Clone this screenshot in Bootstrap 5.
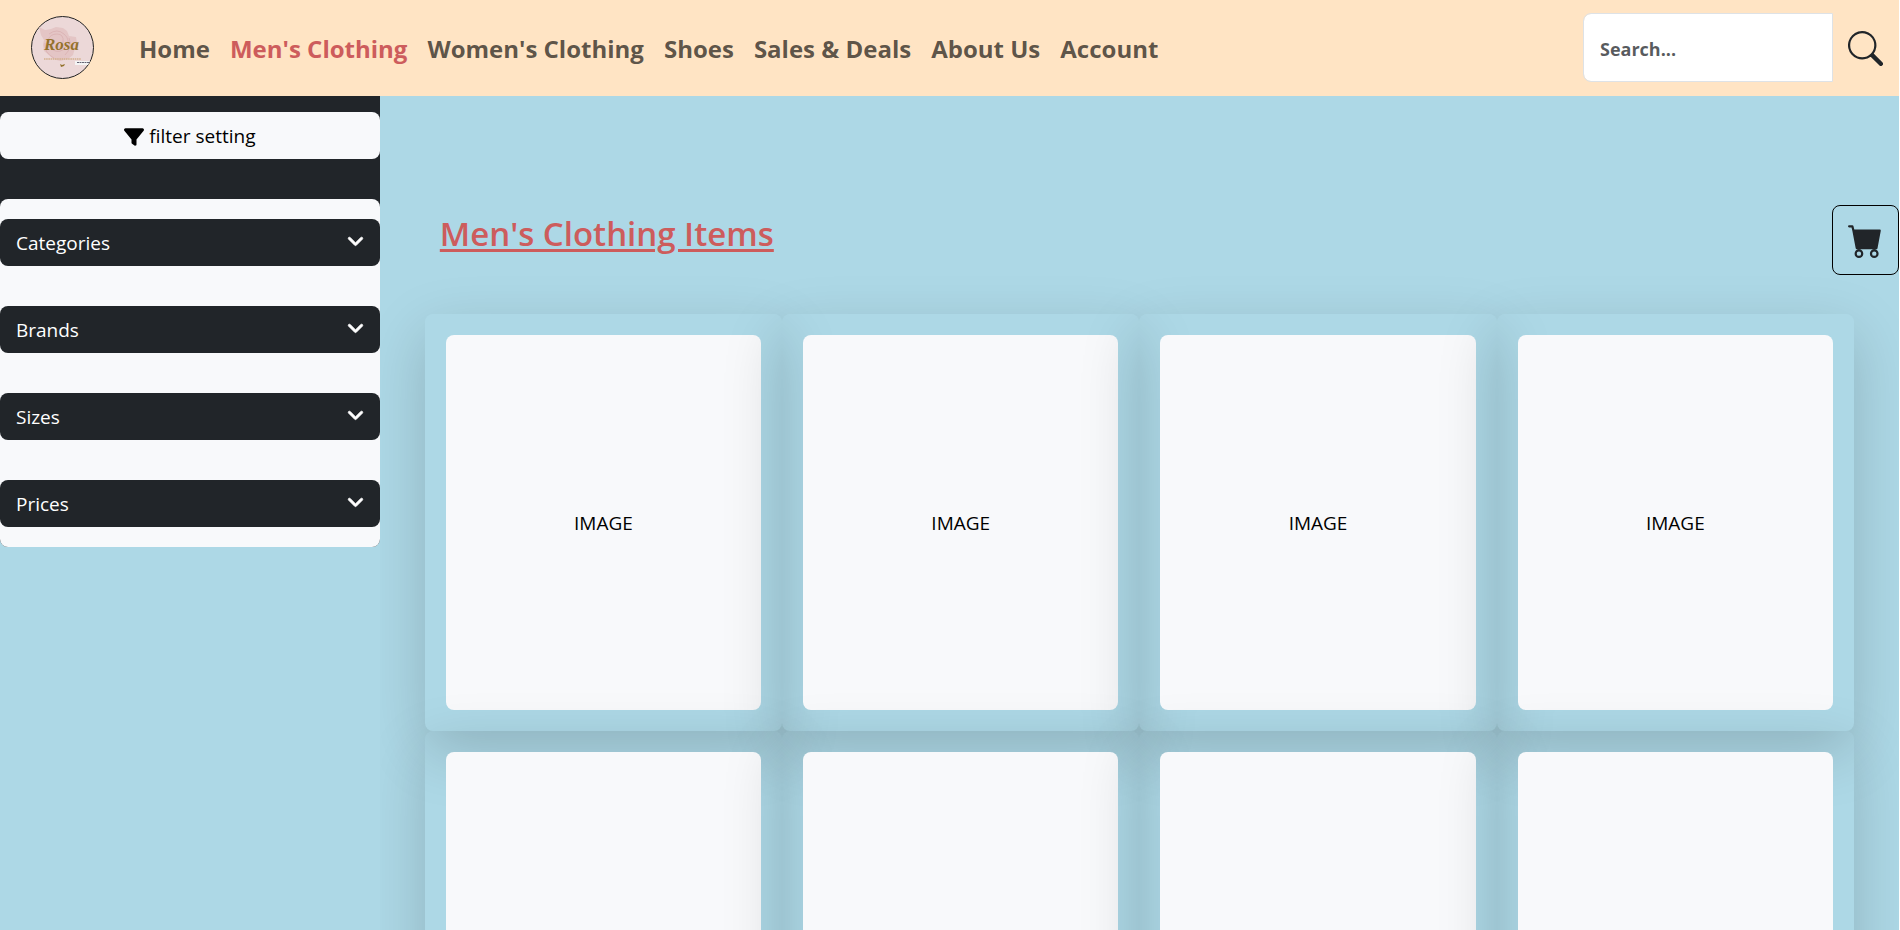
<!DOCTYPE html>
<html lang="en">
<head>
<meta charset="utf-8">
<meta name="viewport" content="width=device-width, initial-scale=1">
<title>Rosa - Men's Clothing</title>
<link href="https://cdn.jsdelivr.net/npm/bootstrap@5.3.0/dist/css/bootstrap.min.css" rel="stylesheet">
<style>
  html { font-size: 20px; background: #fff; }
  body { font-family: "Open Sans", "Noto Sans", sans-serif; font-size: 19px; background: #add8e6; border-right: 1px solid #fff; overflow-x: hidden; }
  .topbar { background: #ffe4c4; height: 96px; padding: 0 0 2px; }
  .logo { margin: 0 35px 0 31px; }
  .logo text { font: italic 700 17px "Liberation Serif", serif; }
  .topbar .nav-link { font-size: 24px; font-weight: 700; padding: 4px 10px 0; white-space: nowrap; }
  .topbar .nav-link.active { color: #cd5c5c; }
  .search-field { width: 250px; height: 69px; padding: 4px 16px 0; font-size: 18px; font-weight: 700; border-radius: 8px 0 0 8px; }
  .search-btn { padding: 2px 16px 0 15px; }
  .shell { background: #add8e6; }
  .filters { flex: 0 0 20%; background: #add8e6; z-index: 2; }
  .panel { background: #212529; border-radius: 0 0 8px 8px; padding-top: 16px; }
  .soft { background: #f8f9fb; }
  .filters .btn { height: 47px; padding: 2px 16px 0; font-size: 19px; border: 0; border-radius: 8px; }
  .chevron { width: 17px; height: 20px; margin-bottom: 4px; fill: #fff; stroke: #fff; stroke-width: 18px; }
  .filter-list { margin-top: 40px; padding: 20px 0; gap: 40px; border-radius: 8px; }
  .catalog { padding: 112px 45px 0; z-index: 1; }
  .catalog-title { color: #cd5c5c; font-size: 33px; font-weight: 600; line-height: 52px; margin: 0 15px 54px; text-decoration: underline; text-decoration-thickness: 3px; text-underline-offset: 3px; }
  .tile { padding: 21px; border-radius: 8px; box-shadow: 0 20px 60px rgba(0, 0, 0, .175); }
  .tile-image { height: 375px; padding-top: 2px; border-radius: 8px; color: #000; }
  .cart-btn { top: 205px; right: 1px; width: 67px; height: 70px; border: 1px solid #000; border-radius: 8px; z-index: 3; }
</style>
</head>
<body>
<nav class="topbar navbar navbar-expand sticky-top">
  <a class="logo d-block" href="#">
    <svg class="d-block" width="63" height="63" viewBox="0 0 63 63">
      <circle cx="31.500" cy="31.500" r="31" fill="#ecd8d8" stroke="#222"/>
      <path d="M8 11l6 3 6-1 5-2 7 1 4 3 2 5 7 1 1 6-2 5-2 7-5 4-8 2-7-2-4-4-5-4-1-6 1-5-3-5z" fill="#e4c5c5"/>
      <path d="M18 18q8-6 15 0t2 13q-6 7-13 3t-5-10 9-6 6 8-6 4M14 27q-1 10 9 15M38 22q4 9-4 17" fill="none" stroke="#d9b0b1" stroke-width=".8"/>
      <text x="13" y="34" fill="#94722c">Rosa</text>
      <path d="M13 43h37" stroke="#d3b08c" stroke-width="1.600" stroke-dasharray="1.500 .7"/>
      <path d="M44 45h15l-2 4H44z" fill="#f4f4f4"/>
      <path d="M46 46.500h13" stroke="#667" stroke-dasharray="2 .5"/>
      <path d="M29 48l2 1 3-1-1 2-3 1z" fill="#94722c"/>
    </svg>
  </a>
  <ul class="navbar-nav me-auto">
    <li class="nav-item"><a class="nav-link" href="#">Home</a></li>
    <li class="nav-item"><a class="nav-link active" href="#">Men's Clothing</a></li>
    <li class="nav-item"><a class="nav-link" href="#">Women's Clothing</a></li>
    <li class="nav-item"><a class="nav-link" href="#">Shoes</a></li>
    <li class="nav-item"><a class="nav-link" href="#">Sales &amp; Deals</a></li>
    <li class="nav-item"><a class="nav-link" href="#">About Us</a></li>
    <li class="nav-item"><a class="nav-link" href="#">Account</a></li>
  </ul>
  <form class="d-flex align-items-center">
    <input class="search-field form-control" type="search" placeholder="Search..." aria-label="Search">
    <button class="search-btn btn border-0" type="button" aria-label="Search">
      <svg class="d-block" width="35" height="35" viewBox="0 0 16 16" fill="#212529"><path d="M11.742 10.344a6.500 6.500 0 1 0-1.397 1.398h-.001c.03.04.062.078.098.115l3.850 3.850a1 1 0 0 0 1.415-1.414l-3.850-3.850a1.007 1.007 0 0 0-.115-.1zM12 6.500a5.500 5.500 0 1 1-11 0 5.500 5.500 0 0 1 11 0z"/></svg>
    </button>
  </form>
</nav>
<button class="cart-btn btn position-fixed d-flex align-items-center justify-content-center p-0" type="button" aria-label="Cart">
  <svg width="35" height="35" viewBox="0 0 16 16" fill="#212529"><path d="M0 1.500A.5.5 0 0 1 .5 1H2a.5.5 0 0 1 .485.379L2.890 3H14.500a.5.5 0 0 1 .491.592l-1.500 8A.5.5 0 0 1 13 12H4a.5.5 0 0 1-.491-.408L2.010 3.607 1.610 2H.5a.5.5 0 0 1-.5-.5zM5 12a2 2 0 1 0 0 4 2 2 0 0 0 0-4zm7 0a2 2 0 1 0 0 4 2 2 0 0 0 0-4zm-7 1a1 1 0 1 1 0 2 1 1 0 0 1 0-2zm7 0a1 1 0 1 1 0 2 1 1 0 0 1 0-2z"/></svg>
</button>
<svg class="d-none">
  <symbol id="chevron" viewBox="0 0 448 512"><path d="M201.400 342.600c12.500 12.500 32.800 12.500 45.300 0l160-160c12.500-12.500 12.500-32.800 0-45.300s-32.800-12.500-45.300 0L224 274.700 86.600 137.400c-12.500-12.500-32.800-12.500-45.300 0s-12.500 32.800 0 45.300l160 160z"/></symbol>
</svg>
<div class="shell d-flex">
  <aside class="filters position-relative">
    <div class="panel">
      <button class="btn soft text-black w-100 d-flex align-items-center justify-content-center gap-1" type="button">
        <svg width="20" height="20" viewBox="0 0 512 512"><path d="M3.900 54.900C10.500 40.900 24.500 32 40 32H472c15.500 0 29.500 8.900 36.100 22.900s4.600 30.500-5.200 42.500L320 320.900V448c0 12.100-6.800 23.200-17.700 28.600s-23.800 4.300-33.500-3l-64-48c-8.100-6-12.800-15.500-12.800-25.600V320.900L9 97.300C-.7 85.400-2.800 68.800 3.900 54.900z"/></svg>
        filter setting
      </button>
      <div class="filter-list soft d-flex flex-column">
        <button class="btn btn-dark d-flex align-items-center justify-content-between" type="button">Categories<svg class="chevron"><use href="#chevron"/></svg></button>
        <button class="btn btn-dark d-flex align-items-center justify-content-between" type="button">Brands<svg class="chevron"><use href="#chevron"/></svg></button>
        <button class="btn btn-dark d-flex align-items-center justify-content-between" type="button">Sizes<svg class="chevron"><use href="#chevron"/></svg></button>
        <button class="btn btn-dark d-flex align-items-center justify-content-between" type="button">Prices<svg class="chevron"><use href="#chevron"/></svg></button>
      </div>
    </div>
  </aside>
  <main class="catalog flex-fill position-relative">
    <h1 class="catalog-title">Men's Clothing Items</h1>
    <div class="row row-cols-4 g-0">
      <div class="tile"><div class="tile-image soft d-flex align-items-center justify-content-center">IMAGE</div></div>
      <div class="tile"><div class="tile-image soft d-flex align-items-center justify-content-center">IMAGE</div></div>
      <div class="tile"><div class="tile-image soft d-flex align-items-center justify-content-center">IMAGE</div></div>
      <div class="tile"><div class="tile-image soft d-flex align-items-center justify-content-center">IMAGE</div></div>
      <div class="tile"><div class="tile-image soft"></div></div>
      <div class="tile"><div class="tile-image soft"></div></div>
      <div class="tile"><div class="tile-image soft"></div></div>
      <div class="tile"><div class="tile-image soft"></div></div>
    </div>
  </main>
</div>
<script src="https://cdn.jsdelivr.net/npm/bootstrap@5.3.0/dist/js/bootstrap.bundle.min.js"></script>
</body>
</html>
